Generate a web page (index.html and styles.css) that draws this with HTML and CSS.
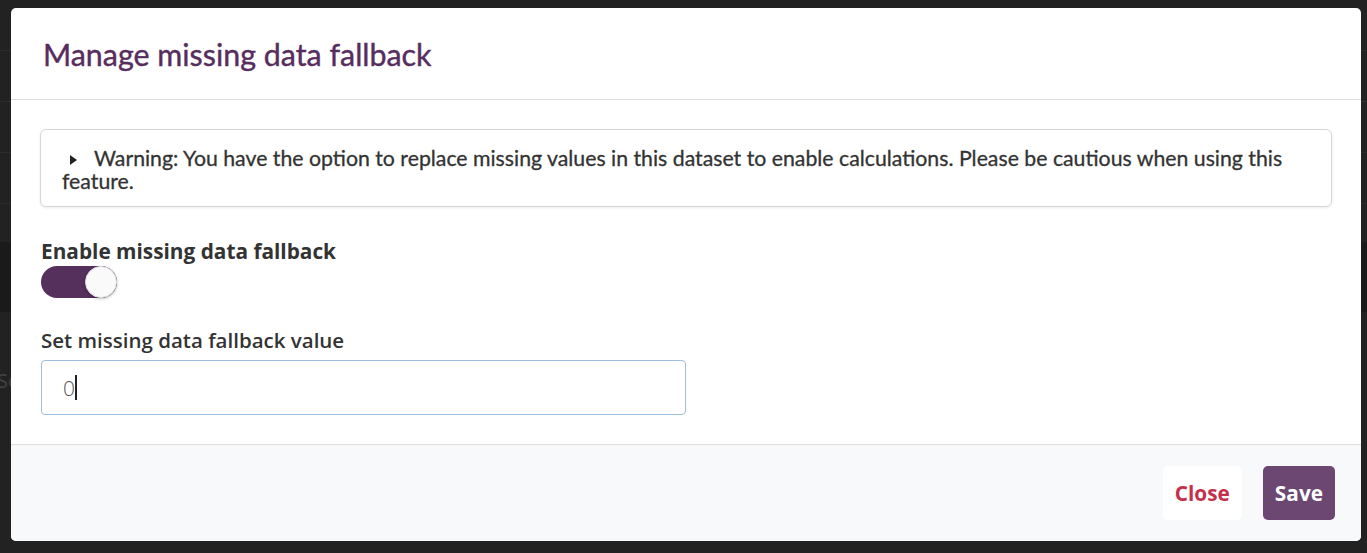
FILE: index.html
```html
<!DOCTYPE html>
<html lang="en">
<head>
    <meta charset="UTF-8">
    <meta name="viewport" content="width=device-width, initial-scale=1.0">
    <title>Manage missing data fallback</title>
    <link rel="stylesheet" href="styles.css">
</head>
<body>
    <!-- page behind the dialog -->
    <div class="page">
        <div class="page-row"></div>
        <div class="page-row"></div>
        <div class="page-row"></div>
        <div class="page-row"></div>
        <div class="page-band"></div>
        <div class="page-text">Sc</div>
    </div>

    <div class="backdrop">
        <div class="modal">
            <div class="modal-header">
                <h2 class="modal-title">Manage missing data fallback</h2>
            </div>

            <div class="modal-body">
                <div class="warning-box">
                    <span class="caret">
                        <svg width="7" height="10" viewBox="0 0 7 10"><path d="M0 0 L7 5 L0 10 Z" fill="#222"/></svg>
                    </span>Warning: You have the option to replace missing values in this dataset to enable calculations. Please be cautious when using this feature.
                </div>

                <label class="field-label">Enable missing data fallback</label>
                <div class="switch on">
                    <span class="knob"></span>
                </div>

                <label class="field-label value-label" for="fallback-value">Set missing data fallback value</label>
                <div class="input-box" id="fallback-value">
                    <span class="input-value">0</span><span class="cursor"></span>
                </div>
            </div>

            <div class="modal-footer">
                <button class="btn btn-close">Close</button>
                <button class="btn btn-save">Save</button>
            </div>
        </div>
    </div>
</body>
</html>
```

FILE: styles.css
```css
body {
    margin: 0;
    background-color: #222;
    font-family: Lato, "Open Sans", sans-serif;
    height: 553px;
    overflow: hidden;
}
.page-row {
    height: 50px;
    border-bottom: 1px solid #2c2c2c;
}
.page-band {
    margin-top: 38px;
    height: 70px;
    background-color: #1a1a1a;
}
.page-text {
    margin-top: 55px;
    margin-left: -3px;
    color: #444;
    font-family: "Open Sans", sans-serif;
    font-size: 20px;
}
.backdrop {
    position: absolute;
    top: 0;
    left: 0;
    right: 0;
    bottom: 0;
    padding: 8px 6px 12px 11px;
}
.modal {
    background-color: white;
    border-radius: 5px;
    height: 533px;
    display: flex;
    flex-direction: column;
    overflow: hidden;
}
.modal-header {
    height: 91px;
    border-bottom: 1px solid #dedede;
    padding: 0 32px;
    display: flex;
    align-items: center;
}
.modal-title {
    margin: 0;
    font-family: Lato, sans-serif;
    font-weight: 400;
    font-size: 30.4px;
    color: #572d5e;
    -webkit-text-stroke: 0.4px #572d5e;
}
.modal-body {
    flex: 1;
    padding: 29px 29px 0 29px;
}
.warning-box {
    border: 1px solid #d6d6d6;
    border-radius: 6px;
    box-shadow: 0 1px 3px rgba(0,0,0,0.08);
    padding: 16px 21px 13px 21px;
    font-size: 21.27px;
    line-height: 23px;
    color: #333;
    -webkit-text-stroke: 0.3px #333;
}
.caret {
    display: inline-block;
    margin: 0 17px 0 8px;
    vertical-align: 1px;
}
.field-label {
    display: block;
    margin: 30px 0 0 1px;
    font-family: "Open Sans", sans-serif;
    font-weight: 700;
    font-size: 20.8px;
    line-height: 28px;
    color: #333;
}
.value-label {
    margin-top: 28px;
    font-weight: 600;
    font-size: 20.5px;
}
.switch {
    position: relative;
    margin: 1px 0 0 1px;
    width: 76px;
    height: 32px;
    border-radius: 16px;
    background-color: #56305d;
}
.knob {
    position: absolute;
    top: 0;
    right: 0;
    width: 30px;
    height: 30px;
    border-radius: 50%;
    background-color: #fafafa;
    border: 1px solid #ddd;
    box-shadow: 0 1px 3px rgba(0,0,0,0.25);
}
.input-box {
    box-sizing: border-box;
    margin: 6px 0 0 1px;
    width: 645px;
    height: 55px;
    border: 1px solid #9dbfe0;
    border-radius: 4px;
    padding: 0 21px;
    display: flex;
    align-items: center;
    font-family: "Open Sans", sans-serif;
    font-weight: 300;
    font-size: 21px;
    color: #555;
}
.cursor {
    display: inline-block;
    width: 2px;
    height: 25px;
    background-color: #222;
}
.modal-footer {
    height: 96px;
    border-top: 1px solid #dedede;
    background-color: #f8f9fa;
    display: flex;
    align-items: center;
    justify-content: flex-end;
    gap: 21px;
    padding-right: 26px;
}
.btn {
    height: 54px;
    border: none;
    border-radius: 5px;
    padding: 0 12px;
    font-family: "Open Sans", sans-serif;
    font-weight: 700;
    font-size: 20.8px;
    cursor: pointer;
}
.btn-close {
    background-color: white;
    color: #c4304b;
}
.btn-save {
    background-color: #6b4771;
    color: white;
}
```
